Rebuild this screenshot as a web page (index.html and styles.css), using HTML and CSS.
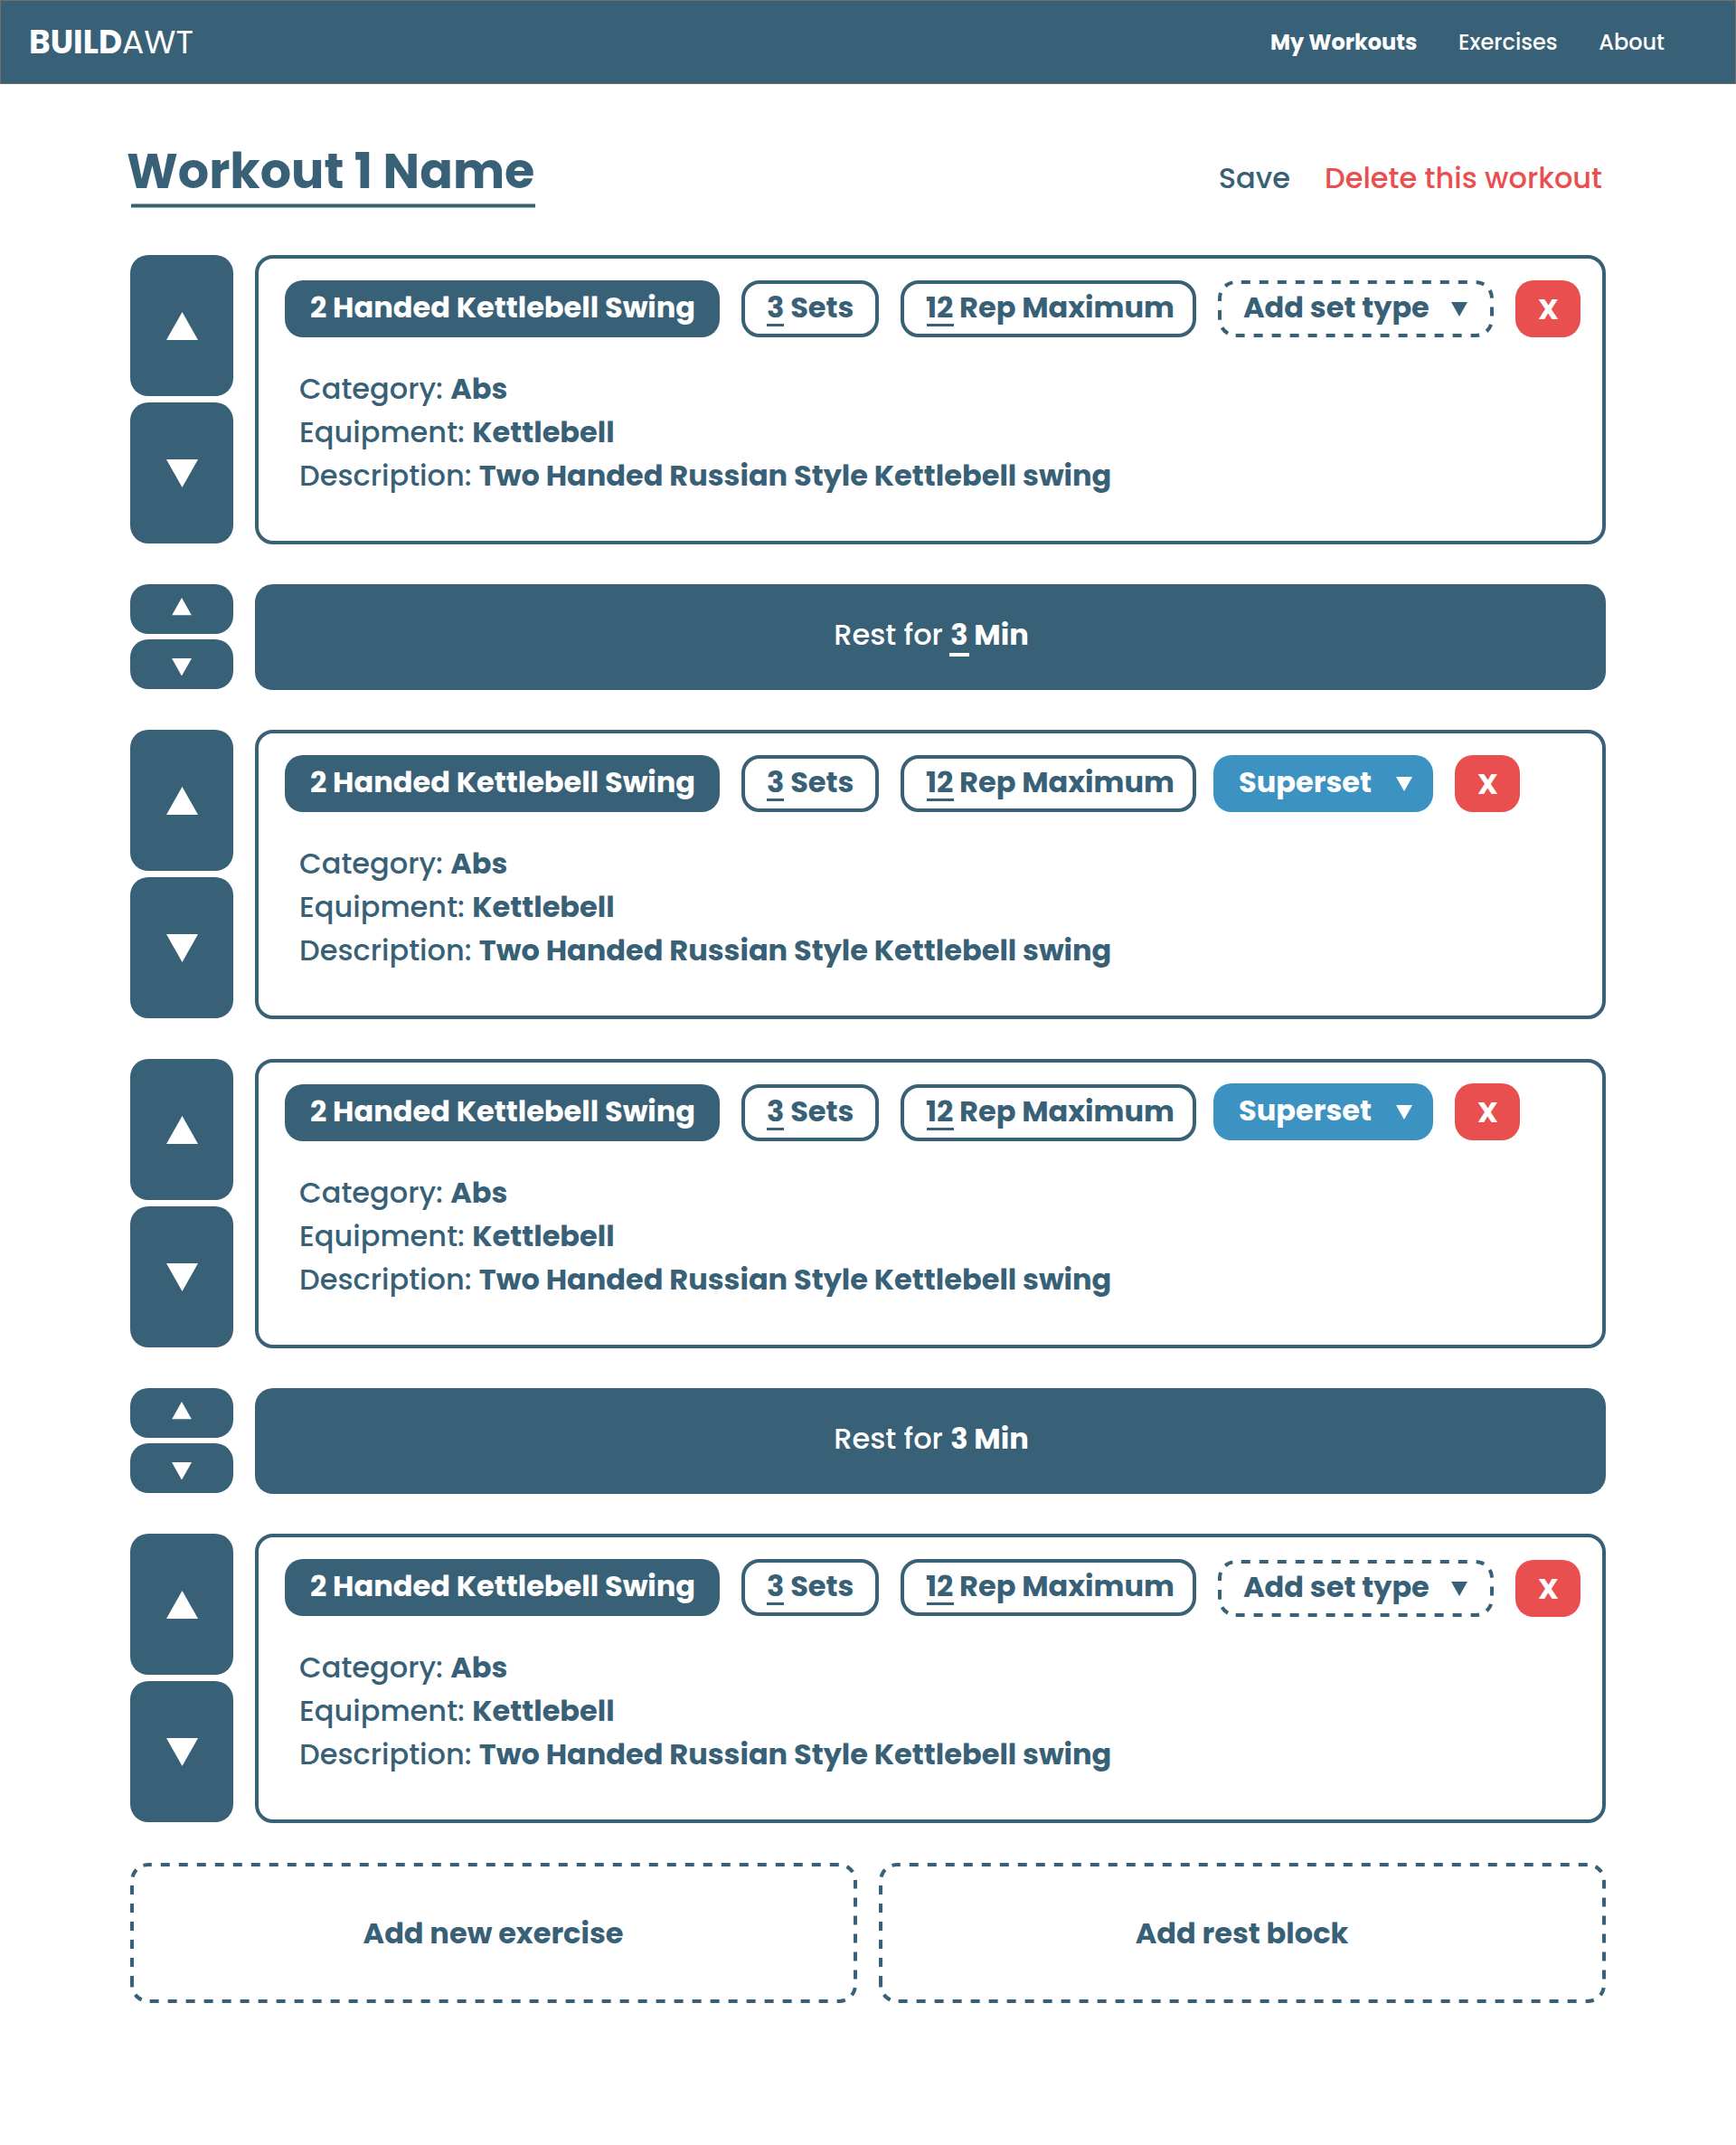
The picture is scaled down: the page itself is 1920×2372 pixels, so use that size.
FILE: index.html
```
<!DOCTYPE html>
<html lang="en">
<head>
<meta charset="utf-8">
<title>BuildAWT</title>
<link rel="stylesheet" href="styles.css">
</head>
<body>
<svg class="defs" width="0" height="0" aria-hidden="true">
  <symbol id="up" viewBox="0 0 35 31"><path d="M17.5 0 35 31H0Z"/></symbol>
  <symbol id="down" viewBox="0 0 35 31"><path d="M17.5 31 0 0h35Z"/></symbol>
  <symbol id="dash-chip" viewBox="0 0 305 63"><path d="M0 43V20A20 20 0 0 1 20 0H285A20 20 0 0 1 305 20V43A20 20 0 0 1 285 63H20A20 20 0 0 1 0 43Z"/></symbol>
  <symbol id="dash-block" viewBox="0 0 804 155"><path d="M0 135V20A20 20 0 0 1 20 0H784A20 20 0 0 1 804 20V135A20 20 0 0 1 784 155H20A20 20 0 0 1 0 135Z"/></symbol>
</svg>

<header class="topbar">
  <div class="logo"><b>BUILD</b>AWT</div>
  <nav class="nav">
    <a class="nav-link active">My Workouts</a>
    <a class="nav-link">Exercises</a>
    <a class="nav-link">About</a>
  </nav>
</header>

<main class="page">
  <div class="heading">
    <h1 class="title">Workout 1 Name</h1>
    <div class="actions">
      <a class="save">Save</a>
      <a class="delete">Delete this workout</a>
    </div>
  </div>

  <div class="rows">
    <section class="row">
      <div class="movers">
        <button class="move up"><svg><use href="#up"/></svg></button>
        <button class="move down"><svg><use href="#down"/></svg></button>
      </div>
      <article class="card">
        <div class="chips">
          <div class="chip name">2 Handed Kettlebell Swing</div>
          <div class="chip sets"><span><span class="num">3</span> Sets</span></div>
          <div class="chip reps"><span><span class="num">12</span> Rep Maximum</span></div>
          <div class="chip add"><svg class="dashes"><use href="#dash-chip"/></svg><span>Add set type</span><svg class="caret"><use href="#down"/></svg></div>
          <button class="chip remove">X</button>
        </div>
        <div class="details">
          <div>Category: <b>Abs</b></div>
          <div>Equipment: <b>Kettlebell</b></div>
          <div>Description: <b>Two Handed Russian Style Kettlebell swing</b></div>
        </div>
      </article>
    </section>

    <section class="row rest-row">
      <div class="movers">
        <button class="move up"><svg><use href="#up"/></svg></button>
        <button class="move down"><svg><use href="#down"/></svg></button>
      </div>
      <article class="rest"><span>Rest for <b><span class="num">3</span> Min</b></span></article>
    </section>

    <section class="row">
      <div class="movers">
        <button class="move up"><svg><use href="#up"/></svg></button>
        <button class="move down"><svg><use href="#down"/></svg></button>
      </div>
      <article class="card">
        <div class="chips">
          <div class="chip name">2 Handed Kettlebell Swing</div>
          <div class="chip sets"><span><span class="num">3</span> Sets</span></div>
          <div class="chip reps"><span><span class="num">12</span> Rep Maximum</span></div>
          <div class="chip superset"><span>Superset</span><svg class="caret"><use href="#down"/></svg></div>
          <button class="chip remove">X</button>
        </div>
        <div class="details">
          <div>Category: <b>Abs</b></div>
          <div>Equipment: <b>Kettlebell</b></div>
          <div>Description: <b>Two Handed Russian Style Kettlebell swing</b></div>
        </div>
      </article>
    </section>

    <section class="row">
      <div class="movers">
        <button class="move up"><svg><use href="#up"/></svg></button>
        <button class="move down"><svg><use href="#down"/></svg></button>
      </div>
      <article class="card">
        <div class="chips">
          <div class="chip name">2 Handed Kettlebell Swing</div>
          <div class="chip sets"><span><span class="num">3</span> Sets</span></div>
          <div class="chip reps"><span><span class="num">12</span> Rep Maximum</span></div>
          <div class="chip superset raised"><span>Superset</span><svg class="caret"><use href="#down"/></svg></div>
          <button class="chip remove raised">X</button>
        </div>
        <div class="details">
          <div>Category: <b>Abs</b></div>
          <div>Equipment: <b>Kettlebell</b></div>
          <div>Description: <b>Two Handed Russian Style Kettlebell swing</b></div>
        </div>
      </article>
    </section>

    <section class="row rest-row">
      <div class="movers">
        <button class="move up"><svg><use href="#up"/></svg></button>
        <button class="move down"><svg><use href="#down"/></svg></button>
      </div>
      <article class="rest"><span>Rest for <b>3 Min</b></span></article>
    </section>

    <section class="row">
      <div class="movers">
        <button class="move up"><svg><use href="#up"/></svg></button>
        <button class="move down"><svg><use href="#down"/></svg></button>
      </div>
      <article class="card">
        <div class="chips">
          <div class="chip name">2 Handed Kettlebell Swing</div>
          <div class="chip sets"><span><span class="num">3</span> Sets</span></div>
          <div class="chip reps"><span><span class="num">12</span> Rep Maximum</span></div>
          <div class="chip add lowered"><svg class="dashes"><use href="#dash-chip"/></svg><span>Add set type</span><svg class="caret"><use href="#down"/></svg></div>
          <button class="chip remove lowered">X</button>
        </div>
        <div class="details">
          <div>Category: <b>Abs</b></div>
          <div>Equipment: <b>Kettlebell</b></div>
          <div>Description: <b>Two Handed Russian Style Kettlebell swing</b></div>
        </div>
      </article>
    </section>

    <div class="adders">
      <button class="adder"><svg class="dashes"><use href="#dash-block"/></svg>Add new exercise</button>
      <button class="adder"><svg class="dashes"><use href="#dash-block"/></svg>Add rest block</button>
    </div>
  </div>
</main>
</body>
</html>
```
FILE: styles.css
```
:root {
  --navy: #386177;
  --blue: #3c92c1;
  --red: #e94f4f;
}

* { box-sizing: border-box; }

body {
  margin: 0;
  min-height: 2372px;
  background: #fff;
  color: var(--navy);
  font: 500 32px/48px Poppins, Inter, "Open Sans", sans-serif;
}

b { font-weight: 700; }

button {
  margin: 0;
  padding: 0;
  border: 0;
  background: none;
  color: inherit;
  font: inherit;
}

svg { display: block; fill: currentColor; }
.defs { position: absolute; }

/* Top bar */
.topbar {
  display: flex;
  align-items: center;
  justify-content: space-between;
  height: 93px;
  padding: 0 78px 0 31px;
  border: 1px solid #716f70;
  background: var(--navy);
  color: #fff;
}
.logo { font-size: 36px; font-weight: 400; }
.nav { display: flex; gap: 45.5px; font-size: 24px; }
.nav-link.active { font-weight: 700; }

/* Heading */
.page { width: 1636px; margin-left: 140px; padding-top: 64px; }
.heading { display: flex; justify-content: space-between; align-items: baseline; height: 125px; }
.title {
  position: relative;
  margin: 0;
  font-size: 54px;
  line-height: 64px;
  font-weight: 700;
  white-space: nowrap;
}
.title::after {
  content: "";
  position: absolute;
  left: 4.5px;
  top: 68px;
  width: 447px;
  height: 4px;
  background: var(--navy);
  transform: translateY(.5px);
}
.actions { display: flex; gap: 38px; padding-right: 4px; }
.delete { color: var(--red); }

/* Rows */
.rows { display: flex; flex-direction: column; gap: 44px; padding-left: 4px; }
.row { display: flex; align-items: flex-start; gap: 24px; }
.movers { display: flex; flex-direction: column; gap: 7px; width: 114px; }
.move {
  display: flex;
  justify-content: center;
  align-items: flex-start;
  height: 156px;
  padding-top: 63px;
  border-radius: 20px;
  background: var(--navy);
  color: #fff;
}
.move svg { width: 35px; height: 31px; }
.move.down { padding-top: 62.5px; }
.rest-row .movers { gap: 6px; }
.rest-row .move { height: 55px; padding-top: 15px; }
.rest-row .move.down { padding-top: 20.5px; }
.rest-row .move svg { width: 22px; height: 19.5px; }

.card {
  flex: 1;
  height: 320px;
  padding: 24px 24px 0 29px;
  border: 4px solid var(--navy);
  border-radius: 20px;
}

/* Chips */
.chips { display: flex; gap: 24px; height: 63px; font-weight: 700; }
.chip {
  position: relative;
  display: flex;
  flex: none;
  align-items: center;
  height: 63px;
  padding: 0 0 4px 28px;
  border-radius: 20px;
  white-space: nowrap;
}
.chip.name { width: 481px; background: var(--navy); color: #fff; }
.chip.sets, .chip.reps { padding-left: 24px; border: 4px solid var(--navy); }
.chip.sets { width: 152px; }
.chip.reps { width: 327px; }
.num { position: relative; }
.num::after {
  content: "";
  position: absolute;
  left: 0;
  top: 41px;
  width: 100%;
  height: 3px;
  background: currentColor;
}
.reps .num::after { left: 1px; }
.chip.add { width: 305px; }
.chip.add .caret { margin-left: auto; margin-right: 29px; }
.chip.superset { width: 243px; margin-left: -5px; background: var(--blue); color: #fff; }
.chip.superset .caret { margin-left: auto; margin-right: 23px; }
.caret { width: 18px; height: 16px; margin-top: 5px; }
.chip.remove { width: 72px; padding: 0 0 0 1px; justify-content: center; background: var(--red); color: #fff; }
.raised { top: -1px; }
.lowered { top: 1px; }

.dashes {
  position: absolute;
  inset: 0;
  width: 100%;
  height: 100%;
  border-radius: 20px;
  overflow: hidden;
  fill: none;
  stroke: var(--navy);
  stroke-width: 8;
  stroke-dasharray: 10 10;
}

/* Details */
.details { margin: 33px 0 0 16px; white-space: nowrap; }

/* Rest blocks */
.rest {
  display: flex;
  flex: 1;
  justify-content: center;
  align-items: center;
  height: 117px;
  padding: 0 0 5px 2px;
  border-radius: 20px;
  background: var(--navy);
  color: #fff;
}
.rest .num::after { left: -1px; top: 43px; width: 22px; height: 4px; }

/* Add buttons */
.adders { display: grid; grid-template-columns: 1fr 1fr; gap: 24px; }
.adder { position: relative; height: 155px; padding-right: 1px; font-weight: 700; }
```
